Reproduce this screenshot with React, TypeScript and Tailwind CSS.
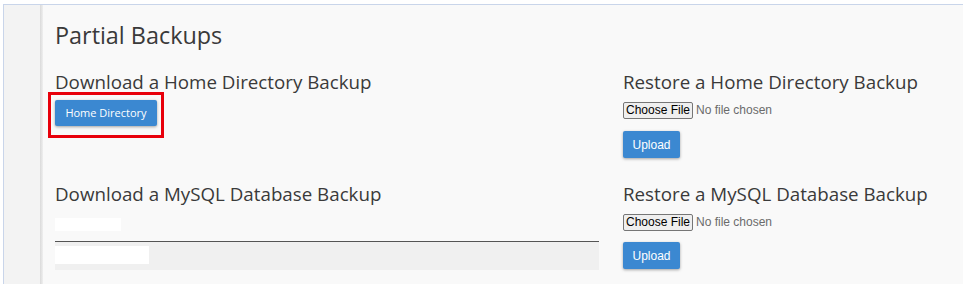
import React from 'react';

const sans = "font-['Open_Sans','Noto_Sans',sans-serif]";
const arial = "font-['Liberation_Sans',Arial,sans-serif]";

function FilePicker() {
  return (
    <div className={`flex items-center ${arial} text-[12px]`}>
      <span className="flex h-[17px] w-[70px] items-center justify-center rounded-[2px] border border-[#767676] bg-[#efefef] text-black">
        Choose File
      </span>
      <span className="ml-[3px] text-[#6b6b6b]">No file chosen</span>
    </div>
  );
}

function UploadButton() {
  return (
    <button
      className={`flex h-[27px] w-[57px] items-center justify-center rounded-[2px] bg-[#3b88d1] text-[12px] text-white shadow-[0_1px_3px_rgba(0,0,0,0.35)] ${arial}`}
    >
      Upload
    </button>
  );
}

export default function App() {
  return (
    <div className="h-[287px] w-[967px] overflow-hidden bg-white">
      <div className="ml-[3px] mt-[4px] flex h-[280px] w-[960px] border-l border-t border-[#c9d5ea]">
        {/* sidebar */}
        <div className="w-[36px] bg-[#f3f3f3]" />
        <div className="w-[3px] bg-gradient-to-r from-[#dadada] to-[#efefef]" />

        {/* main */}
        <div className={`flex-1 bg-[#f9f9f9] px-[12px] pt-[17px] text-[#3a3a3a] ${sans}`}>
          <h2 className="text-[23.4px] leading-[26px]">Partial Backups</h2>

          <div className="mt-[24px] grid grid-cols-[544px_1fr] gap-x-[24px]">
            {/* row 1 left */}
            <div>
              <h3 className="text-[18.75px] leading-[20px]">Download a Home Directory Backup</h3>
              <div className="relative mt-[8px] w-fit">
                <button className="flex h-[26px] w-[102px] items-center justify-center rounded-[2px] bg-[#3b88d1] text-[11px] text-white shadow-[0_1px_3px_rgba(0,0,0,0.35)]">
                  Home Directory
                </button>
                <div className="pointer-events-none absolute -left-[7px] -top-[8px] h-[46px] w-[116px] border-[3px] border-[#e8000b]" />
              </div>
            </div>

            {/* row 1 right */}
            <div>
              <h3 className="text-[18.75px] leading-[20px]">Restore a Home Directory Backup</h3>
              <div className="mt-[9px]">
                <FilePicker />
              </div>
              <div className="mt-[12px]">
                <UploadButton />
              </div>
            </div>

            {/* row 2 left */}
            <div className="mt-[26px]">
              <h3 className="text-[18.75px] leading-[20px]">Download a MySQL Database Backup</h3>
              <div className="mt-[14px] h-[13px] w-[66px] bg-white" />
              <div className="mt-[10px] border-t-[1.5px] border-[#555]">
                <div className="bg-[#f0f0f0] pb-[6px] pt-[4px]">
                  <div className="h-[18px] w-[94px] bg-white" />
                </div>
              </div>
            </div>

            {/* row 2 right */}
            <div className="mt-[26px]">
              <h3 className="text-[18.75px] leading-[20px]">Restore a MySQL Database Backup</h3>
              <div className="mt-[9px]">
                <FilePicker />
              </div>
              <div className="mt-[11px]">
                <UploadButton />
              </div>
            </div>
          </div>
        </div>
      </div>
    </div>
  );
}
